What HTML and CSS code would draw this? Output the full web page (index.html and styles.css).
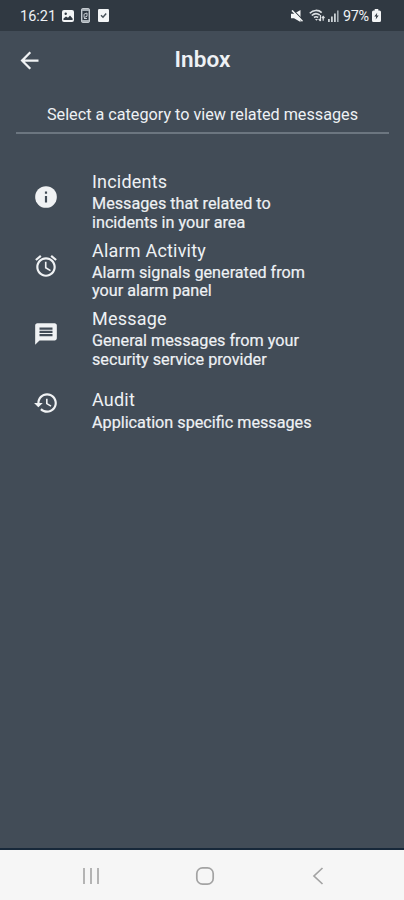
FILE: index.html
```html
<!DOCTYPE html>
<html lang="en">
<head>
<meta charset="utf-8">
<title>Inbox</title>
<link rel="stylesheet" href="styles.css">
</head>
<body>
<div class="phone">
  <div class="status">
    <span class="clock">16:21</span>
    <svg class="s-image" width="12" height="12" viewBox="0 0 12 12"><rect width="12" height="12" rx="2" fill="#f3f5f6"/><circle cx="3.7" cy="3.8" r="1.2" fill="#303942"/><path d="M1.5 10V8.5L4 6.5l2 1.3L8 5.5l2.6 3V10z" fill="#303942"/></svg>
    <svg class="s-phone" width="9" height="15" viewBox="0 0 9 15"><rect x=".5" y=".5" width="8" height="14" rx="1.3" fill="#a9b1b7" stroke="#c5cbd0"/><path d="M1.5 3h6v9h-6z" fill="#303942"/><path d="M3 9.5V6.2L6 5v3.3zM3 10.5h3" fill="none" stroke="#c5cbd0"/></svg>
    <svg class="s-check" width="11" height="13" viewBox="0 0 11 13"><rect width="11" height="13" rx="1.2" fill="#f3f5f6"/><path d="M3 6.2l2 2 3.2-3.6" fill="none" stroke="#47515a" stroke-width="1.5"/></svg>
    <div class="status-right">
      <svg width="12" height="12" viewBox="0 0 12 12"><path d="M0 3.8h3L9.5 0v12L3 8.2H0z" fill="#f3f5f6"/><path d="M2 0l10 10" stroke="#303942" stroke-width="1.2"/><path d="M1 .4l10.5 10.8" stroke="#f3f5f6" stroke-width="1.5"/></svg>
      <svg class="s-wifi" width="17" height="13" viewBox="0 0 17 13" fill="none" stroke="#dce0e3" stroke-width="1.6"><path d="M.8 4.2C4.3.7 9.3.5 12.7 3.6M2.8 6.5c2.4-2.3 5.5-2.4 8-.3M5 8.5c1.5-1.1 2.8-1.1 4.2 0"/><path d="M6 10l1.4 1.8L9 10z" fill="#dce0e3" stroke="none"/><path d="M11.5 6v6M11.5 12l-1.8-2M14.2 7.5v4.2M12.9 9l1.3-1.5L15.5 9" stroke-width="1.2"/></svg>
      <svg class="s-signal" width="11" height="12" viewBox="0 0 11 12" fill="#cbd1d5"><path d="M0 9h1.8v3H0zM3 6.5h1.8V12H3zM6 3.5h1.8V12H6z"/><path d="M9 .5h1.6V12H9z" fill="#a3acb3"/></svg>
      <span class="percent">97%</span>
      <svg class="s-battery" width="9" height="13" viewBox="0 0 9 13"><path d="M2.7 0h3.6v1.5H7.5Q9 1.5 9 3v8.5Q9 13 7.5 13h-6Q0 13 0 11.5V3q0-1.5 1.5-1.5h1.2z" fill="#f3f5f6"/><path d="M5.2 3.7L2.3 7.6h1.9l-.5 3 3-4H4.8z" fill="#303942"/></svg>
    </div>
  </div>

  <header class="appbar">
    <svg class="back" width="27" height="27" viewBox="0 0 24 24"><path d="M20 11H7.83l5.59-5.59L12 4l-8 8 8 8 1.41-1.41L7.83 13H20v-2z"/></svg>
    <h1>Inbox</h1>
  </header>

  <p class="prompt">Select a category to view related messages</p>

  <main class="list">
    <div class="row">
      <svg class="icon" viewBox="0 0 24 24"><circle cx="12" cy="12" r="10"/><path class="ink" d="M11 11h2v6h-2zM11 7h2v2h-2z"/></svg>
      <div class="copy"><h2>Incidents</h2><p>Messages that related to<br>incidents in your area</p></div>
    </div>
    <div class="row">
      <svg class="icon" viewBox="0 0 24 24"><path d="M22 5.72l-4.6-3.86-1.29 1.53 4.6 3.86L22 5.72zM7.88 3.39L6.6 1.86 2 5.71l1.29 1.53 4.59-3.85zM12.5 8H11v6l4.75 2.85.75-1.23-4-2.37V8zM12 4c-4.97 0-9 4.03-9 9s4.02 9 9 9c4.97 0 9-4.03 9-9s-4.03-9-9-9zm0 16c-3.87 0-7-3.13-7-7s3.13-7 7-7 7 3.13 7 7-3.13 7-7 7z"/></svg>
      <div class="copy"><h2>Alarm Activity</h2><p>Alarm signals generated from<br>your alarm panel</p></div>
    </div>
    <div class="row">
      <svg class="icon" viewBox="0 0 24 24"><path d="M20 2H4c-1.1 0-1.99.9-1.99 2L2 22l4-4h14c1.1 0 2-.9 2-2V4c0-1.1-.9-2-2-2z"/><path class="ink" d="M6 6h12v2H6zM6 9h12v2H6zM6 12h12v2H6z"/></svg>
      <div class="copy"><h2>Message</h2><p>General messages from your<br>security service provider</p></div>
    </div>
    <div class="row single">
      <svg class="icon" viewBox="0 0 24 24"><path d="M13 3c-4.97 0-9 4.03-9 9H1l3.89 3.89.07.14L9 12H6c0-3.87 3.13-7 7-7s7 3.13 7 7-3.13 7-7 7c-1.93 0-3.68-.79-4.94-2.06l-1.42 1.42C8.27 19.99 10.51 21 13 21c4.97 0 9-4.03 9-9s-4.03-9-9-9zm-1 5v5l4.28 2.54.72-1.21-3.5-2.08V8H12z"/></svg>
      <div class="copy"><h2>Audit</h2><p>Application specific messages</p></div>
    </div>
  </main>

  <nav class="navbar">
    <svg width="18" height="18" viewBox="0 0 18 18" stroke="#a9a9a9" stroke-width="1.7"><path d="M2 1v16M9 1v16M16 1v16"/></svg>
    <svg class="home" width="20" height="20" viewBox="0 0 20 20" fill="none" stroke="#a3a3a3" stroke-width="1.7"><rect x="1.8" y="1.8" width="16.4" height="16.4" rx="5.8"/></svg>
    <svg width="12" height="18" viewBox="0 0 12 18" fill="none" stroke="#a3a3a3" stroke-width="1.7"><path d="M10.5 1L2 9l8.500 8"/></svg>
  </nav>
</div>
</body>
</html>
```
FILE: styles.css
```css
* { box-sizing: border-box; margin: 0; padding: 0; }
body {
  width: 404px;
  height: 900px;
  overflow: hidden;
  font-family: Roboto, "Liberation Sans", sans-serif;
  color: #eef1f4;
  background: #424c57;
}
svg { display: block; flex: none; }
.phone { height: 900px; display: flex; flex-direction: column; }
.status {
  height: 31px;
  flex: none;
  display: flex;
  align-items: center;
  padding: 0 23px 0 20px;
  background: #303942;
}
.clock { font-size: 14.5px; width: 42px; padding-top: 1px; }
.s-phone { margin-left: 7px; }
.s-check { margin-left: 8px; }
.status-right { margin-left: auto; display: flex; align-items: center; }
.s-wifi { margin-left: 6px; }
.s-signal { margin-left: 2px; }
.percent { font-size: 14.4px; width: 27px; margin-left: 4px; padding-top: 1px; letter-spacing: -0.3px; }
.s-battery { margin-left: 2px; }
.appbar {
  height: 59px;
  flex: none;
  display: grid;
  grid-template-columns: 27px 1fr 27px;
  align-items: center;
  padding: 0 15px 0 16px;
}
.back { fill: #f0f2f4; }
h1 { text-align: center; font-size: 22.6px; font-weight: 600; line-height: 26px; margin-top: -1px; }
.prompt {
  margin: 0 15px 0 16px;
  height: 44px;
  flex: none;
  padding-top: 15px;
  text-align: center;
  font-size: 16.2px;
  line-height: 20px;
  white-space: nowrap;
  border-bottom: 2px solid #6c7680;
}
.list { flex: 1; padding: 29px 32px 0; }
.row { display: flex; height: 68.6px; padding-top: 8px; }
.icon { width: 26px; height: 26px; margin: 13px 33px 0 1px; fill: #f0f2f4; }
.ink { fill: #424c57; }
.single { padding-top: 20px; }
.single .icon { margin-top: 1px; }
.copy { white-space: nowrap; }
h2 { font-size: 18px; font-weight: 400; line-height: 22px; margin-bottom: 2px; letter-spacing: 0.2px; }
.copy p { font-size: 16.2px; line-height: 18.7px; -webkit-text-stroke: 0.2px #eef1f4; }
.single h2 { margin-bottom: 3px; }
.navbar {
  height: 52px;
  flex: none;
  display: flex;
  align-items: center;
  justify-content: space-between;
  padding: 2px 80px 0 82px;
  background: #f6f6f6;
  border-top: 2px solid #17283a;
}
.home { margin-right: 3px; }
```
